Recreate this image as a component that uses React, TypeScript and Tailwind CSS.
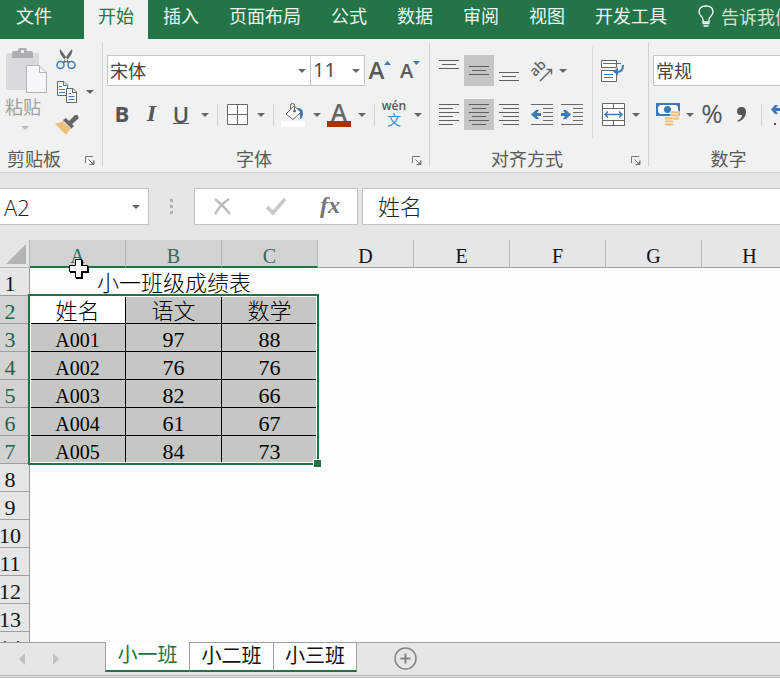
import React from "react";

const SANS = "font-['Noto_Sans_CJK_SC',sans-serif]";
const UI = "font-['Open_Sans','Noto_Sans_CJK_SC',sans-serif]";
const SERIF = "font-['Liberation_Serif','Noto_Sans_CJK_SC',serif]";

function Caret({ className = "text-[#666]" }: { className?: string }) {
  return (
    <svg width="8" height="4" viewBox="0 0 8 4" className={className} aria-hidden="true">
      <path d="M0 0H8L4 4Z" fill="currentColor" />
    </svg>
  );
}

function Tool({
  label,
  active,
  className = "w-[30px]",
  children,
}: {
  label: string;
  active?: boolean;
  className?: string;
  children?: React.ReactNode;
}) {
  return (
    <button
      type="button"
      aria-label={label}
      className={`flex h-[31px] shrink-0 items-center justify-center ${active ? "bg-[#c5c5c5]" : ""} ${className}`}
    >
      {children}
    </button>
  );
}

function More({ label, className = "w-[17px]" }: { label: string; className?: string }) {
  return (
    <Tool label={label} className={className}>
      <Caret />
    </Tool>
  );
}

function Sep() {
  return <div className="mx-1 h-[22px] w-px shrink-0 bg-[#d0d2d2]" />;
}

/* Stacked horizontal strokes, each given as [x1, x2, y]. */
function Lines({ rows, h = 22 }: { rows: number[][]; h?: number }) {
  return (
    <svg width="20" height={h} viewBox={`0 0 20 ${h}`} shapeRendering="crispEdges" aria-hidden="true">
      {rows.map(([a, b, y], i) => (
        <rect key={i} x={a} y={y} width={b - a} height="1" fill="#5f5f5f" />
      ))}
    </svg>
  );
}

const shortRows = [[0, 20, 0], [3, 17, 4], [0, 20, 8]];
const leftRows = [[0, 20, 0], [0, 14, 4], [0, 20, 8], [0, 14, 12], [0, 20, 16], [0, 14, 20]];
const centerRows = [[0, 20, 0], [3, 17, 4], [0, 20, 8], [3, 17, 12], [0, 20, 16], [3, 17, 20]];
const rightRows = [[0, 20, 0], [4, 20, 4], [0, 20, 8], [4, 20, 12], [0, 20, 16], [4, 20, 20]];

function Indent({ flip }: { flip?: boolean }) {
  return (
    <svg width="22" height="22" viewBox="0 0 22 22" aria-hidden="true">
      <g fill="#6a6a6a" shapeRendering="crispEdges">
        <rect x="0" y="0" width="22" height="1" />
        <rect x="12" y="4" width="10" height="1" />
        <rect x="12" y="8" width="10" height="1" />
        <rect x="12" y="12" width="10" height="1" />
        <rect x="12" y="16" width="10" height="1" />
        <rect x="0" y="20" width="22" height="1" />
      </g>
      <path
        d={flip ? "M0 9H4L2 6H5L10 10.5L5 15H2L4 12H0Z" : "M10 9H6L8 6H5L0 10.5L5 15H8L6 12H10Z"}
        fill="#3b7bb5"
      />
    </svg>
  );
}

function Group({
  title,
  launcher,
  className = "",
  labelClass = "text-center",
  children,
}: {
  title: string;
  launcher?: boolean;
  className?: string;
  labelClass?: string;
  children: React.ReactNode;
}) {
  return (
    <section
      aria-label={title}
      className={`mt-1 mb-[5px] flex h-[124px] shrink-0 flex-col justify-between border-r border-[#d0d2d2] ${className}`}
    >
      {children}
      <div className="flex items-center">
        <div className={`flex-1 text-lg leading-4 text-[#5a5a5a] ${labelClass}`}>{title}</div>
        <button type="button" aria-label={`${title}设置`} className="flex h-[18px] w-6 items-end justify-center">
          {launcher && (
            <svg width="10" height="12" viewBox="0 0 10 12" fill="none" stroke="#777" aria-hidden="true">
              <path d="M.5 8V1.5H8M3.5 4.5L8 9M9 5V9.5H4.5" />
              <path d="M9 6V10H5Z" fill="#777" stroke="none" />
            </svg>
          )}
        </button>
      </div>
    </section>
  );
}

function Combo({ label, value, className }: { label: string; value: string; className: string }) {
  return (
    <div className={`relative h-[31px] shrink-0 ${className}`}>
      <select
        aria-label={label}
        defaultValue={value}
        className="h-full w-full appearance-none border border-[#c3c3c3] bg-white pb-[2px] pl-[2px] leading-6 text-[#444] outline-none"
      >
        <option>{value}</option>
      </select>
      <span className="pointer-events-none absolute inset-y-0 right-[5px] flex items-center">
        <Caret />
      </span>
    </div>
  );
}

function Clipboard() {
  return (
    <Group title="剪贴板" launcher className="w-[103px]" labelClass="pl-[7px] text-left">
      <div className="flex">
        <button type="button" className="flex h-24 w-[50px] flex-col items-start pt-1">
          <svg width="50" height="47" viewBox="0 0 50 47" aria-hidden="true">
            <rect x="6" y="6" width="33" height="37" fill="#d9dadc" />
            <path d="M12 11V6Q12 4 14 4H18V3Q18 1 20 1H25Q27 1 27 3V4H31Q33 4 33 6V11Z" fill="#aeaeb0" />
            <rect x="21" y="3" width="3" height="3" fill="#eee" />
            <path d="M26.500 18.500H39L46.500 26V45.500H26.500Z" fill="#f7f7f9" stroke="#b3b3b5" />
            <path d="M39.500 18.500V25.500H46.500" fill="none" stroke="#b3b3b5" />
          </svg>
          <span className="pl-[5px] text-lg leading-6 text-[#a0a0a0]">粘贴</span>
          <span className="flex h-3 w-full items-end justify-center">
            <Caret className="text-[#bbb]" />
          </span>
        </button>
        <div className="flex flex-col">
          <button type="button" aria-label="剪切" className="flex h-8 w-8 items-center justify-center">
            <svg width="20" height="22" viewBox="0 0 20 22" aria-hidden="true">
              <path d="M4 1L8 6L13 14L11 15L5 7Q3 3 4 1ZM16 1L12 6L7 14L9 15L15 7Q17 3 16 1Z" fill="#666" />
              <circle cx="4.500" cy="17" r="3.500" fill="none" stroke="#3b7bb5" strokeWidth="1.500" />
              <circle cx="15.500" cy="17" r="3.500" fill="none" stroke="#3b7bb5" strokeWidth="1.500" />
            </svg>
          </button>
          <div className="flex">
            <button type="button" aria-label="复制" className="flex h-[34px] w-[34px] items-center justify-center">
              <svg width="20" height="22" viewBox="0 0 20 22" aria-hidden="true">
                <path d="M.5 .5H7L10.500 4V14.500H.5Z" fill="#fff" stroke="#666" />
                <path d="M6.500 .5V4.500H10.500M2 5.500H5M2 8.500H8M2 11.500H8" stroke="#3b7bb5" fill="none" />
                <path d="M9.500 7.500H16L19.500 11V21.500H9.500Z" fill="#fff" stroke="#666" />
                <path d="M15.500 7.500V11.500H19.500" stroke="#666" fill="none" />
                <path d="M11.500 12.500H14M11.500 15.500H17.500M11.500 18.500H17.500" stroke="#3b7bb5" />
              </svg>
            </button>
            <button type="button" aria-label="复制选项" className="flex h-[34px] w-3 items-center justify-center">
              <Caret />
            </button>
          </div>
          <button type="button" aria-label="格式刷" className="flex h-8 w-[34px] items-center justify-center">
            <svg width="24" height="20" viewBox="0 0 24 20" aria-hidden="true">
              <path d="M0 9L9 6L16 13L11 20Z" fill="#ecc07a" />
              <path d="M8 5L11 3L19 11L16 14Z" fill="#666" />
              <path d="M13 7L20 0Q22 -1 23 1Q24 3 23 4L16 10Z" fill="#666" />
              <path d="M9 7L16 13.500" stroke="#f0f2f1" />
            </svg>
          </button>
        </div>
      </div>
    </Group>
  );
}

function FontGroup() {
  return (
    <Group title="字体" launcher className="w-[327px] pt-3">
      <div className="flex flex-col gap-[13px] pl-1">
        <div className="flex">
          <Combo label="字体" value="宋体" className="w-[204px] text-lg" />
          <Combo
            label="字号"
            value="11"
            className="-ml-px w-[55px] font-['Open_Sans','Noto_Sans_CJK_SC',sans-serif] text-xl"
          />
          <Tool label="增大字号">
            <span className={`${UI} pb-[2px] text-2xl leading-7 font-semibold text-[#5a5a5a]`}>A</span>
            <svg width="7" height="20" viewBox="0 0 7 20" aria-hidden="true">
              <path d="M0 4H7L3.500 0Z" fill="#3b7bb5" />
            </svg>
          </Tool>
          <Tool label="减小字号">
            <span className={`${UI} text-xl leading-7 font-semibold text-[#5a5a5a]`}>A</span>
            <svg width="7" height="20" viewBox="0 0 7 20" aria-hidden="true">
              <path d="M0 0H7L3.500 4Z" fill="#3b7bb5" />
            </svg>
          </Tool>
        </div>
        <div className="flex items-center">
          <Tool label="加粗">
            <span className={`${UI} pb-1 text-[22px] leading-6 font-bold text-[#555]`}>B</span>
          </Tool>
          <Tool label="倾斜" className="w-[29px]">
            <span className="pb-1 font-['Liberation_Serif',serif] text-2xl leading-6 font-bold text-[#555] italic">I</span>
          </Tool>
          <Tool label="下划线">
            <span className={`${UI} border-b border-[#555] text-[22px] leading-[18px] font-semibold text-[#555]`}>U</span>
          </Tool>
          <More label="下划线选项" />
          <Sep />
          <Tool label="边框">
            <svg width="21" height="21" viewBox="0 0 21 21" aria-hidden="true">
              <path d="M.5 .5H20.500V20.500H.5ZM10.500 .5V20.500M.5 10.500H20.500" fill="#fff" stroke="#666" />
            </svg>
          </Tool>
          <More label="边框选项" />
          <Sep />
          <Tool label="填充颜色">
            <svg width="24" height="25" viewBox="0 0 24 25" aria-hidden="true">
              <path d="M16 6Q22 6 22 11Q22 16 19 17Q20 12 16 10Z" fill="#3b7bb5" />
              <path d="M5 12L13 4L20 10L12 17.500Z" fill="#fff" stroke="#666" />
              <path d="M9.500 8V3Q9.500 1.500 11.500 1.500Q13.500 1.500 13.500 3V9" fill="none" stroke="#666" />
              <circle cx="13.500" cy="9" r="1.500" fill="#666" />
              <rect x="0" y="19" width="24" height="6" fill="#fff" />
            </svg>
          </Tool>
          <More label="填充颜色选项" />
          <Tool label="字体颜色" className="w-7">
            <span
              className={`${UI} w-6 border-b-[6px] border-[#a83205] text-center text-2xl leading-[18px] font-semibold text-[#666]`}
            >
              A
            </span>
          </Tool>
          <More label="字体颜色选项" />
          <Sep />
          <Tool label="拼音">
            <span className={`${UI} flex flex-col items-center pb-[2px] text-[#555]`}>
              <span className="text-xs leading-3 font-semibold">wén</span>
              <span className="text-sm leading-4 text-[#3b8bc5]">文</span>
            </span>
          </Tool>
          <More label="拼音选项" />
        </div>
      </div>
    </Group>
  );
}

function AlignGroup() {
  return (
    <Group title="对齐方式" launcher className="w-[219px]">
      <div className="flex pt-1 pl-1">
        <div className="flex flex-col gap-[13px] pt-2">
          <div className="flex">
            <Tool label="顶端对齐" className="w-[30px] pb-3">
              <Lines h={10} rows={shortRows} />
            </Tool>
            <Tool label="垂直居中" active>
              <Lines h={10} rows={shortRows} />
            </Tool>
            <Tool label="底端对齐" className="w-[30px] pt-3">
              <Lines h={10} rows={shortRows} />
            </Tool>
            <Tool label="方向" className="ml-[3px] w-[30px]">
              <svg width="24" height="24" viewBox="0 0 24 24" aria-hidden="true">
                <g transform="rotate(-45 10 12)">
                  <text x="2" y="13" fontSize="14" fontWeight="600" fontFamily="Open Sans" fill="#666">
                    ab
                  </text>
                </g>
                <path d="M10 22L21 11M16.500 10.500H21.500V15.500" stroke="#666" strokeWidth="1.500" fill="none" />
              </svg>
            </Tool>
            <More label="方向选项" className="w-3" />
          </div>
          <div className="flex">
            <Tool label="左对齐">
              <Lines rows={leftRows} />
            </Tool>
            <Tool label="居中" active>
              <Lines rows={centerRows} />
            </Tool>
            <Tool label="右对齐">
              <Lines rows={rightRows} />
            </Tool>
            <Tool label="减少缩进量" className="ml-[3px] w-[30px]">
              <Indent />
            </Tool>
            <Tool label="增加缩进量">
              <Indent flip />
            </Tool>
          </div>
        </div>
        <div className="ml-[5px] h-[91px] w-px bg-[#d8dada]" />
        <div className="flex flex-col gap-[13px] pt-2 pl-1">
          <Tool label="自动换行" className="w-8">
            <svg width="24" height="22" viewBox="0 0 24 22" aria-hidden="true">
              <path d="M.5 .5H15.500V7.500H.5ZM.5 10.500H15.500V21.500H.5Z" fill="#fff" stroke="#666" />
              <path d="M2 3.500H20M3 14.500H12M3 17.500H12" stroke="#3b7bb5" />
              <path d="M22 5Q22 12 16 12" fill="none" stroke="#3b7bb5" strokeWidth="2" />
              <path d="M12 11.500L17 7.500V15.500Z" fill="#3b7bb5" />
            </svg>
          </Tool>
          <div className="flex">
            <Tool label="合并后居中" className="w-8">
              <svg width="23" height="23" viewBox="0 0 23 23" aria-hidden="true">
                <path
                  d="M.5 .5H22.500V22.500H.5ZM.5 5.500H22.500M.5 17.500H22.500M11.500 .5V5.500M11.500 17.500V22.500"
                  fill="#fff"
                  stroke="#666"
                />
                <path d="M3 11.500H20M6 8.500L3 11.500L6 14.500M17 8.500L20 11.500L17 14.500" fill="none" stroke="#3b7bb5" strokeWidth="1.500" />
              </svg>
            </Tool>
            <More label="合并选项" className="w-[14px]" />
          </div>
        </div>
      </div>
    </Group>
  );
}

function NumberGroup() {
  return (
    <Group title="数字" launcher className="w-[184px] pt-3">
      <div className="flex flex-col gap-[13px] pl-1">
        <Combo label="数字格式" value="常规" className="w-[176px] text-lg" />
        <div className="flex items-center">
          <Tool label="会计数字格式">
            <svg width="24" height="23" viewBox="0 0 24 23" aria-hidden="true">
              <path d="M0 0H24V13H0Z" fill="#3b7bb5" />
              <path d="M4 2H20L22 4V9L20 11H4L2 9V4Z" fill="#fff" />
              <circle cx="11.500" cy="6.500" r="3.500" fill="#3b7bb5" />
              <g fill="#ecc07a" stroke="#f0f2f1" strokeWidth=".8">
                <rect x="14.500" y="8" width="9" height="3" rx="1.500" />
                <rect x="14.500" y="11" width="9" height="3" rx="1.500" />
                <rect x="14.500" y="14" width="9" height="3" rx="1.500" />
                <rect x="8.500" y="14" width="9" height="3" rx="1.500" />
                <rect x="8.500" y="17" width="9" height="3" rx="1.500" />
                <rect x="8.500" y="20" width="9" height="3" rx="1.500" />
              </g>
            </svg>
          </Tool>
          <More label="会计格式选项" className="w-[14px]" />
          <Tool label="百分比">
            <span className={`${UI} pb-1 text-[26px] leading-6 text-[#555]`}>%</span>
          </Tool>
          <Tool label="千位分隔">
            <svg width="10" height="15" viewBox="0 0 10 15" aria-hidden="true">
              <path d="M4.500 0Q9 0 9 5Q9 12 1 15L0.500 13.500Q5 11.500 5 8Q0 8.500 0 4.500Q0 0 4.500 0Z" fill="#555" />
            </svg>
          </Tool>
          <Sep />
          <Tool label="增加小数位数">
            <svg width="20" height="22" viewBox="0 0 20 22" aria-hidden="true">
              <path d="M9 4H5L7 1H4L0 5.500L4 10H7L5 7H9Z" fill="#3b7bb5" />
              <rect x="3" y="19" width="2" height="2" fill="#555" />
              <rect x="10.500" y="12.500" width="5" height="8" rx="2" fill="none" stroke="#555" />
            </svg>
          </Tool>
        </div>
      </div>
    </Group>
  );
}

const menu = ["插入", "页面布局", "公式", "数据", "审阅", "视图", "开发工具"];

function TabBar() {
  return (
    <nav className="flex h-[39px] shrink-0 overflow-hidden bg-[#237447] text-lg leading-[30px] whitespace-nowrap text-[#eef5f0]">
      <button type="button" className="flex w-[84px] shrink-0 pl-4">文件</button>
      <button type="button" className="flex w-16 shrink-0 justify-center bg-[#f0f2f1] text-[#237447]">开始</button>
      {menu.map((m) => (
        <button key={m} type="button" className="flex shrink-0 px-[15px]">
          {m}
        </button>
      ))}
      <button type="button" className="flex shrink-0 gap-[7px] pl-4 text-[#cfe2d6]">
        <svg width="16" height="22" viewBox="0 0 16 22" className="mt-[5px]" fill="none" stroke="#fff" aria-hidden="true">
          <path d="M5 17V15Q5 13 3 11Q1 9 1 7Q1 1 8 1Q15 1 15 7Q15 9 13 11Q11 13 11 15V17Z" strokeWidth="1.300" />
          <path d="M4.500 18.500H11.500M5.500 21H10.500" strokeWidth="1.500" />
        </svg>
        <span className="leading-8">告诉我们您想要做什么...</span>
      </button>
    </nav>
  );
}

function FormulaBar() {
  return (
    <div className="flex shrink-0 bg-[#e6e6e6] py-[15px]">
      <div className="relative h-[37px] w-[149px] shrink-0">
        <input
          aria-label="名称框"
          defaultValue="A2"
          className="h-full w-full border border-l-0 border-[#c3c3c3] bg-white pl-1 font-['Open_Sans',sans-serif] text-[22px] font-light text-[#222] outline-none"
        />
        <button type="button" aria-label="名称列表" className="absolute inset-y-0 right-[9px] flex items-center">
          <Caret />
        </button>
      </div>
      <div className="flex w-[45px] shrink-0 flex-col items-center justify-center gap-[3px]">
        <span className="h-[3px] w-[3px] bg-[#b0b0b0]" />
        <span className="h-[3px] w-[3px] bg-[#b0b0b0]" />
        <span className="h-[3px] w-[3px] bg-[#b0b0b0]" />
      </div>
      <div className="mr-1 flex h-[37px] w-[164px] shrink-0 items-center border border-[#c3c3c3] bg-white">
        <button type="button" aria-label="取消" className="flex h-full w-[54px] items-center justify-center">
          <svg width="17" height="17" viewBox="0 0 17 17" aria-hidden="true">
            <path d="M1 1Q10 8 16 16M15 1Q7 6 1 16" stroke="#bdbdbd" strokeWidth="2.500" fill="none" />
          </svg>
        </button>
        <button type="button" aria-label="输入" className="flex h-full w-[54px] items-center justify-center">
          <svg width="20" height="17" viewBox="0 0 20 17" aria-hidden="true">
            <path d="M1 9L7 15L19 1" stroke="#c8c8c8" strokeWidth="3.500" fill="none" />
          </svg>
        </button>
        <button
          type="button"
          aria-label="插入函数"
          className="h-full w-[54px] pb-1 text-center font-['Liberation_Serif',serif] text-2xl leading-7 font-bold text-[#777] italic"
        >
          fx
        </button>
      </div>
      <input
        aria-label="编辑栏"
        defaultValue="姓名"
        className="h-[37px] min-w-0 flex-1 border border-r-0 border-[#c3c3c3] bg-white pb-1 pl-[15px] text-[22px] font-light text-[#222] outline-none"
      />
    </div>
  );
}

const columns = ["A", "B", "C", "D", "E", "F", "G", "H"];
const records = [
  ["姓名", "语文", "数学"],
  ["A001", "97", "88"],
  ["A002", "76", "76"],
  ["A003", "82", "66"],
  ["A004", "61", "67"],
  ["A005", "84", "73"],
];

function RowHeader({ n }: { n: number }) {
  const selected = n >= 2 && n <= 7;
  return (
    <th
      scope="row"
      className={`border-r border-b border-[#9c9f9f] p-0 pr-[9px] text-center font-normal ${
        selected ? "bg-[#d2d2d2] text-[#27604a]" : "bg-[#e6e6e6] text-[#111]"
      }`}
    >
      <div className="flex h-[27px] justify-center leading-8">{n}</div>
    </th>
  );
}

function Sheet() {
  return (
    <main className={`relative min-h-0 flex-1 overflow-hidden bg-[#fdfdfd] ${SERIF}`}>
      <table className="w-[798px] table-fixed border-separate border-spacing-0 text-[22px] font-light text-black">
        <colgroup>
          <col className="w-[30px]" />
          {columns.map((c) => (
            <col key={c} className="w-24" />
          ))}
        </colgroup>
        <thead>
          <tr className="h-7">
            <td className="border-r border-b border-[#b4b7b7] bg-[#e6e6e6] p-0">
              <svg width="20" height="20" viewBox="0 0 20 20" className="ml-[6px]" aria-hidden="true">
                <path d="M20 0V20H0Z" fill="#b2b5b4" />
              </svg>
            </td>
            {columns.map((c, i) => (
              <th
                key={c}
                scope="col"
                className={`border-r border-r-[#b4b7b7] p-0 align-top text-xl font-normal ${
                  i < 3
                    ? "border-b-2 border-b-[#217346] bg-[#d2d2d2] text-[#35695a]"
                    : "border-b border-b-[#9c9f9f] bg-[#e6e6e6] text-[#111]"
                }`}
              >
                <div className="h-[26px] leading-8">{c}</div>
              </th>
            ))}
          </tr>
        </thead>
        <tbody>
          <tr className="h-7">
            <RowHeader n={1} />
            <td colSpan={3} className="p-0 text-center">
              <div className="h-[27px] leading-[30px]">小一班级成绩表</div>
            </td>
            <td colSpan={5} />
          </tr>
          {records.map((r, i) => (
            <tr key={r[0]} className="h-7">
              <RowHeader n={i + 2} />
              {r.map((v, j) => (
                <td
                  key={j}
                  className={`border-r border-b border-black p-0 text-center ${
                    i === 0 && j === 0 ? "bg-white" : "bg-[#c6c6c4]"
                  } ${i > 0 && j === 0 ? "text-xl" : ""}`}
                >
                  <div className="h-[27px] leading-8">{v}</div>
                </td>
              ))}
              <td colSpan={5} />
            </tr>
          ))}
          {[8, 9, 10, 11, 12, 13, 14].map((n) => (
            <tr key={n} className="h-7">
              <RowHeader n={n} />
              <td colSpan={8} />
            </tr>
          ))}
        </tbody>
      </table>
      <div className="pointer-events-none absolute top-[54px] left-7 h-[171px] w-[291px] border-2 border-[#217346] ring-1 ring-white ring-inset">
        <span className="absolute -right-1 -bottom-1 h-2 w-2 border-t border-l border-white bg-[#217346]" />
      </div>
      <svg width="22" height="22" viewBox="0 0 22 22" className="absolute top-[18px] left-[68px]" aria-hidden="true">
        <path d="M8 2H15V8H21V15H15V21H8V15H2V8H8Z" fill="#000" />
        <path d="M7.500 1.500H13.500V7.500H19.500V13.500H13.500V19.500H7.500V13.500H1.500V7.500H7.500Z" fill="#fff" stroke="#000" />
      </svg>
    </main>
  );
}

function SheetTabs() {
  return (
    <footer className="shrink-0 bg-[#e6e6e6]">
      <div className="flex h-[33px] items-start">
        <div className="flex h-8 w-[105px] items-center gap-[26px] border-t border-[#9c9f9f] pl-[18px]">
          <button type="button" aria-label="上一个工作表">
            <svg width="8" height="12" viewBox="0 0 8 12" aria-hidden="true">
              <path d="M7 0V12L1 6Z" fill="#c0c0c0" />
            </svg>
          </button>
          <button type="button" aria-label="下一个工作表">
            <svg width="8" height="12" viewBox="0 0 8 12" aria-hidden="true">
              <path d="M1 0V12L7 6Z" fill="#c0c0c0" />
            </svg>
          </button>
        </div>
        <button type="button" className="h-[30px] w-[84px] border-b-2 border-l border-b-[#217346] border-l-[#9c9f9f] bg-white pb-1 text-xl leading-6 text-[#217346]">
          小一班
        </button>
        <button type="button" className="h-[30px] w-[84px] border-t border-b-2 border-l border-t-[#9c9f9f] border-b-[#217346] border-l-[#9c9f9f] bg-white pb-1 text-xl leading-6 text-[#111]">
          小二班
        </button>
        <button type="button" className="h-[30px] w-[84px] border-x border-t border-b-2 border-x-[#9c9f9f] border-t-[#9c9f9f] border-b-[#217346] bg-white pb-1 text-xl leading-6 text-[#111]">
          小三班
        </button>
        <div className="flex h-8 flex-1 items-center border-t border-[#9c9f9f] pl-[37px]">
          <button type="button" aria-label="新工作表">
            <svg width="23" height="23" viewBox="0 0 23 23" fill="none" stroke="#808584" aria-hidden="true">
              <circle cx="11.500" cy="11.500" r="10.500" strokeWidth="1.500" />
              <path d="M11.500 6.500V16.500M6.500 11.500H16.500" strokeWidth="2" />
            </svg>
          </button>
        </div>
      </div>
      <div className="h-[3px] border-y border-[#b8b8b8]" />
    </footer>
  );
}

export default function App() {
  return (
    <div className={`flex h-screen flex-col overflow-hidden ${SANS}`}>
      <TabBar />
      <div className="flex shrink-0 overflow-hidden border-b border-[#d0d2d2] bg-[#f0f2f1]">
        <Clipboard />
        <FontGroup />
        <AlignGroup />
        <NumberGroup />
      </div>
      <FormulaBar />
      <Sheet />
      <SheetTabs />
    </div>
  );
}
